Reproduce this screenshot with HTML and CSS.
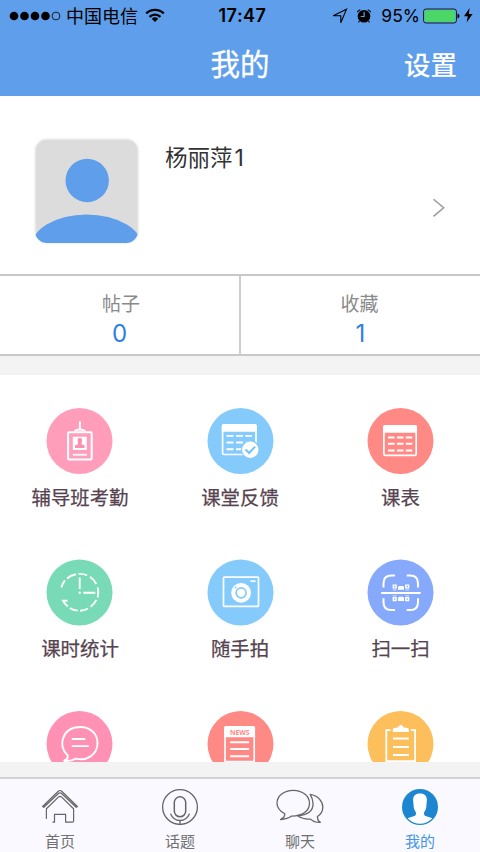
FILE: index.html
```html
<!DOCTYPE html>
<html lang="zh-CN">
<head>
<meta charset="utf-8">
<title>我的</title>
<link rel="stylesheet" href="styles.css">
</head>
<body>
<header class="top">
  <div class="status">
    <div class="status-left">
      <svg width="52" height="12" viewBox="0 0 52 12"><circle cx="5" cy="6" r="4.3"/><circle cx="15.5" cy="6" r="4.3"/><circle cx="26" cy="6" r="4.3"/><circle cx="36.5" cy="6" r="4.3"/><circle cx="47" cy="6" r="3.9" fill="none" stroke="#000" stroke-width=".8"/></svg>
      <span class="carrier">中国电信</span>
      <svg class="wifi" width="20" height="15" viewBox="0 0 20 15" fill="none" stroke="#000" stroke-width="2.3"><path d="M1.2 5.4a12.6 12.6 0 0 1 17.6 0M4.5 8.8a8 8 0 0 1 11 0"/><path d="M10 14l-3.3-3.2a5 5 0 0 1 6.6 0z" fill="#000" stroke="none"/></svg>
    </div>
    <span class="time">17:47</span>
    <div class="status-right">
      <svg width="16" height="16" viewBox="0 0 16 16" fill="none" stroke="#000" stroke-width="1.1"><path d="M1.2 7.7L14.5 1.2 8.8 14.7V7.7z"/></svg>
      <svg class="alarm" width="16" height="16" viewBox="0 0 16 16"><circle cx="8" cy="8.2" r="6.3"/><path d="M1.3 4.3A5 5 0 0 1 4.3 1.7M14.7 4.3a5 5 0 0 0-3-2.600M3.500 13l-1 1.300M12.500 13l1 1.300" fill="none" stroke="#000" stroke-width="1.100"/><path d="M8.100 4v4.500H4.700" fill="none" stroke="#5f9eea" stroke-width="1.200"/></svg>
      <span class="percent">95%</span>
      <svg class="battery" width="37" height="16" viewBox="0 0 37 16"><rect x=".5" y="1" width="33" height="14" rx="2.500" fill="none" stroke="#111" stroke-width=".9"/><rect x="1.600" y="2.200" width="30.500" height="11.600" rx="1.300" fill="#4bd763"/><path d="M34.500 5.500q2 .7 2 2.500t-2 2.500z"/></svg>
      <svg class="bolt" width="9" height="15" viewBox="0 0 9 15"><path d="M5.600 0L0 8.300h3.800L2.600 14.500 8.600 6H4.800z"/></svg>
    </div>
  </div>
  <div class="nav"><span></span><h1>我的</h1><a class="settings">设置</a></div>
</header>

<section class="profile">
  <svg class="avatar" width="106" height="106" viewBox="0 0 106 106">
    <defs><clipPath id="face"><rect x="1" y="1" width="103" height="104" rx="12"/></clipPath></defs>
    <rect x="1" y="1" width="103.400" height="104" rx="12" fill="#dcdcdc" stroke="#efefef" stroke-width="1.600"/>
    <g fill="#5f9eea" clip-path="url(#face)"><circle cx="53.200" cy="42.500" r="21.700"/><ellipse cx="52.700" cy="110" rx="56" ry="33.500"/></g>
  </svg>
  <span class="name">杨丽萍<i class="digit">1</i></span>
  <svg class="chevron" width="14" height="20" viewBox="0 0 14 20" fill="none" stroke="#999" stroke-width="1.500"><path d="M1.500 1.200l10.200 8.600L1.500 18.400"/></svg>
</section>

<section class="stats">
  <div class="stat"><span>帖子</span><b>0</b></div>
  <div class="stat"><span>收藏</span><b>1</b></div>
</section>

<main class="grid">
  <div class="item">
    <svg class="icon" viewBox="0 0 67 67"><circle cx="33.500" cy="33" r="33" fill="#ff9dba"/>
      <g transform="translate(.5 0)"><g fill="none" stroke="#fff" stroke-width="2"><path d="M33.400 13.500V22M28 23q5.400-3 10.800 0"/><rect x="21.600" y="24.200" width="23.600" height="27.200" rx="1"/><path d="M26.300 46.700h14" stroke-width="1.800"/></g>
      <path d="M26.300 28.700h14V42h-14z" fill="#fff"/><path d="M28.500 40v-2.600l3-1.200v-1.400q-1.600-4.500 1.800-4.700 3.400.2 1.800 4.700v1.400l3 1.200V40z" fill="#ff8fb0"/></g></svg>
    <span>辅导班考勤</span>
  </div>
  <div class="item">
    <svg class="icon" viewBox="0 0 67 67"><circle cx="33.500" cy="33" r="33" fill="#84cbfb"/>
      <g transform="translate(.5 0)"><rect x="15.100" y="17" width="33.400" height="29.500" rx="1.400" fill="none" stroke="#fff" stroke-width="1.700"/><path d="M14.300 17.500q0-1.600 1.600-1.600h31.800q1.600 0 1.600 1.600v6.300h-35z" fill="#fff"/>
      <path d="M19 27.900h7m2.500 0h7m2.300 0h6.700M19 34.500h7m2.500 0h7m2.300 0h6.700M19 41.200h7m2.500 0h7" stroke="#fff" stroke-width="1.900"/>
      <circle cx="42.800" cy="41.700" r="9.400" fill="#84cbfb"/><circle cx="42.800" cy="41.700" r="8.200" fill="#fff"/><path d="M38 41.500l3.600 3.500 6-6.400" fill="none" stroke="#76c1f5" stroke-width="2"/></g></svg>
    <span>课堂反馈</span>
  </div>
  <div class="item">
    <svg class="icon" viewBox="0 0 67 67"><circle cx="33.500" cy="33" r="33" fill="#ff8985"/>
      <g transform="translate(.5 0)"><rect x="16.400" y="18" width="32.300" height="29.400" rx="1.400" fill="none" stroke="#fff" stroke-width="1.700"/><path d="M15.600 18.500q0-1.600 1.600-1.600h30.700q1.600 0 1.600 1.600v6.300H15.600z" fill="#fff"/>
      <path d="M20.500 29.400h6.600m2.300 0H36m2.300 0h6.500M20.500 35.800h6.600m2.300 0H36m2.300 0h6.500M20.500 42.600h6.600m2.300 0H36m2.300 0h6.500" stroke="#fff" stroke-width="2"/></g></svg>
    <span>课表</span>
  </div>
  <div class="item">
    <svg class="icon" viewBox="0 0 67 67"><circle cx="33.500" cy="33.400" r="33" fill="#79dab8"/>
      <g transform="translate(.5 .4)" fill="none" stroke="#fff" stroke-width="1.900"><path d="M14.800 28A18.700 18.700 0 0 1 18.500 21M20.500 19.100a18.700 18.700 0 0 1 9-4.300M32 14.500q4.500-.3 8.600 1.400M43.500 17.300q4.200 2.900 6.300 7.300M51.200 28.200q1.300 4.800 0 9.900M50 40.500q-2.100 4-5.900 6.800M41.500 49.100q-3.500 2.100-8 2.200M31.200 51.200q-4.300-.3-7.800-2.500M21.300 47.100q-3.100-2.600-4.800-5.800h4.500"/><path d="M33.200 18v11.600M36.800 33.300h12"/><circle cx="33.200" cy="33.300" r="1.200" fill="#fff" stroke="none"/></g></svg>
    <span>课时统计</span>
  </div>
  <div class="item">
    <svg class="icon" viewBox="0 0 67 67"><circle cx="33.500" cy="33.400" r="33" fill="#84cbfb"/>
      <g transform="translate(.5 .4)"><rect x="16" y="17.700" width="35" height="29.300" rx="1" fill="none" stroke="#fff" stroke-width="1.700"/><circle cx="33.600" cy="33.400" r="9.900" fill="#fff"/><circle cx="33.600" cy="33.400" r="5" fill="none" stroke="#84cbfb" stroke-width="1.700"/><circle cx="28" cy="28" r="1" fill="#84cbfb"/><path d="M43 21.800h5" stroke="#fff" stroke-width="1.700"/></g></svg>
    <span>随手拍</span>
  </div>
  <div class="item">
    <svg class="icon" viewBox="0 0 67 67"><circle cx="33.500" cy="33.400" r="33" fill="#86a9fb"/>
      <g transform="translate(.5 .4)"><path d="M16 28v-4q0-7.800 7.800-7.800H27.500M39.200 16.200h3.500q7.800 0 7.800 7.800v4M16 38.800v4q0 7.800 7.800 7.800h3.700M39.200 50.600h3.500q7.800 0 7.800-7.800v-4M13.600 33.600h39.600" fill="none" stroke="#fff" stroke-width="2"/>
      <g fill="none" stroke="#fff" stroke-width="1.400"><path d="M25.800 25.700h2.800v2.800h-2.800zM38.300 25.700h2.800v2.800h-2.800zM25.800 38.300h2.800v2.800h-2.800zM38.300 38.300h2.800v2.800h-2.800z"/><path d="M25.200 30.500h3.800m9 0h3.600M25.200 36.400h3.800m9 0h3.600" stroke-width=".7"/></g><path d="M31.500 26.500h4l1 1.200v2.700h-6v-2.700zM31.500 37.400h4l1 1.200v3h-6v-3z" fill="#fff"/></g></svg>
    <span>扫一扫</span>
  </div>
  <div class="item">
    <svg class="icon" viewBox="0 0 67 67"><circle cx="33.500" cy="33" r="33" fill="#ff91b4"/>
      <g transform="translate(.5 0)" fill="none" stroke="#fff" stroke-width="1.900"><path d="M21 44.200C11.500 36.500 14.600 16 33.800 16 43.800 16 51 22.700 51 32c0 12-11.200 18.400-21.600 15.600-3.400 2-7.700 2.700-12.200 2.200 3.500-1.200 4.500-3.400 3.800-5.600z"/><path d="M25.300 28h13.500M25.300 35.100h17"/></g></svg>
  </div>
  <div class="item">
    <svg class="icon" viewBox="0 0 67 67"><circle cx="33.500" cy="33" r="33" fill="#ff8985"/>
      <path d="M18 50.500V17h29.200v33.500z" fill="none" stroke="#fff" stroke-width="1.700"/><path d="M17.100 16.500q0-1.500 1.500-1.500h28q1.500 0 1.500 1.500v9.800h-31z" fill="#fff"/><text class="news" x="32.700" y="24.100" textLength="19.600" lengthAdjust="spacingAndGlyphs">NEWS</text>
      <path d="M23.200 31.200h18.900M23.200 38h18.900M23.200 45.200h18.900" stroke="#fff" stroke-width="2"/></svg>
  </div>
  <div class="item">
    <svg class="icon" viewBox="0 0 67 67"><circle cx="33.500" cy="33" r="33" fill="#fdbf5b"/>
      <g transform="translate(.5 0)"><path d="M23.200 19.200h-4.400v31h28.800v-31h-4.400" fill="none" stroke="#fff" stroke-width="1.800"/><path d="M25.300 21v-2.300q0-1.300 1.500-1.700l3.500-.6q.8-2.500 3-2.500t3 2.500l3.500.6q1.500.4 1.500 1.700V21z" fill="#fff"/><path d="M25.500 27.500h15.800M25.500 35.900h15.800M25.500 44.100h15.800" stroke="#fff" stroke-width="2"/></g></svg>
  </div>
</main>

<nav class="tabs">
  <a class="tab">
    <svg width="48" height="38" viewBox="0 0 48 38" fill="none" stroke="#666" stroke-width="1.200" stroke-linejoin="round" stroke-linecap="round"><path d="M6.600 19.500L22.300 4.200q1.700-1.400 3.400 0l15.700 15.300-1.200.8L25.300 6.300q-1.300-1-2.600 0L7.800 20.300z"/><path d="M10.400 31.500V21.700L22.600 9.900q1.400-1 2.800 0l12.200 11.800v12.200q0 1.200-1.200 1.200h-6.800V27.400H18.500v7.700h-1.600"/></svg>
    <span>首页</span>
  </a>
  <a class="tab">
    <svg width="48" height="38" viewBox="0 0 48 38" fill="none" stroke="#666" stroke-width="1.300"><circle cx="24" cy="20" r="17.400"/><rect x="18.300" y="9.800" width="11.400" height="20" rx="5.700" stroke-width="1.500"/><path d="M14.500 26.700q2.700 6.500 9.500 6.800 6.800-.3 9.500-6.800M24 33.500v4"/></svg>
    <span>话题</span>
  </a>
  <a class="tab">
    <svg width="48" height="38" viewBox="0 0 48 38" fill="none" stroke="#666" stroke-width="1.300" stroke-linejoin="round"><path d="M8.800 26.800C5 24.700 1 21.200 1 16.200 1 8.800 8 3.300 17.200 3.300S33.500 8.800 33.500 16.200 26.500 29.500 15.200 29.200c-2.700 2-5.700 2.900-10.700 3.300C7.500 31.200 8.900 29.500 8.800 26.800z"/><path d="M34.200 7.400c8 1.200 12.600 7 12.600 12.800 0 4.300-2.500 7.500-5.300 9.300-.2 2.500.5 4.300 2.800 5.900-4.300.2-7.600-1.200-9.800-3.300-5.500.6-9.500-1-13.300-3.600 10 .1 16.400-4.600 15.800-12.500-.2-3.300-1.200-6-2.800-8.600z"/></svg>
    <span>聊天</span>
  </a>
  <a class="tab active">
    <svg width="48" height="38" viewBox="0 0 48 38"><defs><clipPath id="me"><circle cx="24" cy="20" r="16.700"/></clipPath></defs><circle cx="24" cy="20" r="18" fill="#1c87d0"/><path clip-path="url(#me)" d="M24 6.500c5.500 0 7.500 3.300 6.700 8.500l-.4 5c-.4 2.500-1.300 4-2.200 5.200v2.500c1.200 2 7.200 2.200 10.700 5V38H9.200v-5.300c3.500-2.800 9.500-3 10.700-5v-2.500c-.9-1.200-1.800-2.700-2.200-5.200l-.4-5c-.8-5.200 1.200-8.500 6.700-8.500z" fill="#fff"/></svg>
    <span>我的</span>
  </a>
</nav>
</body>
</html>
```
FILE: styles.css
```css
* { box-sizing: border-box; }
body {
  margin: 0;
  width: 480px;
  height: 852px;
  display: flex;
  flex-direction: column;
  overflow: hidden;
  background: #f3f3f3;
  font-family: "Noto Sans CJK SC", sans-serif;
}
svg { display: block; flex: none; }

.top { height: 96px; background: #5f9eea; flex: none; }
.status {
  height: 31px;
  display: grid;
  grid-template-columns: 1fr auto 1fr;
  align-items: center;
  padding: 0 7px 0 9px;
}
.status-left, .status-right { display: flex; align-items: center; }
.status-right { justify-content: flex-end; }
.carrier { font-size: 18px; line-height: 28px; margin: -2px 0 0 5px; }
.wifi { margin-left: 7px; }
.time { font: 600 18px/30px Inter, sans-serif; letter-spacing: .5px; padding-left: 3px; }
.alarm { margin-left: 8px; }
.percent { font: 400 17.500px/30px Inter, sans-serif; margin-left: 9px; margin-right: -1px; }
.battery { margin-left: 4px; }
.bolt { margin-left: 4px; }
.nav {
  height: 63px;
  display: grid;
  grid-template-columns: 1fr auto 1fr;
  align-items: center;
  color: #fff;
  padding: 0 23px;
}
.nav h1 { margin: 0; font-size: 29.500px; font-weight: 400; line-height: 58px; margin-top: -2px; -webkit-text-stroke: .3px #fff; }
.settings { justify-self: end; font-size: 26.500px; font-weight: 500; line-height: 58px; padding-top: 3px; }

.profile {
  height: 178px;
  flex: none;
  background: #fff;
  display: flex;
  align-items: flex-start;
  padding: 42px 34px 0 34px;
}
.name { margin: 2px 0 0 25px; font-size: 22.500px; line-height: 32px; color: #333; }
.digit { font: 400 23px/30px Inter, sans-serif; margin-left: 2px; }
.chevron { margin: 60px 0 0 auto; }

.stats {
  height: 82px;
  flex: none;
  display: flex;
  background: #fff;
  border-top: 2px solid #c8c8c8;
  border-bottom: 2px solid #c8c8c8;
}
.stat { flex: 0 0 239px; display: flex; flex-direction: column; align-items: center; padding-top: 13px; }
.stat:first-child { padding-left: 3px; }
.stat:first-child b { margin-left: -3px; }
.stat + .stat { flex: 1; border-left: 2px solid #ccc; padding-right: 2px; }
.stat + .stat b { margin-left: 2px; }
.stat span { font-size: 19px; line-height: 28px; color: #8a8a8a; }
.stat b { font: 400 24px/32px Inter, sans-serif; margin-top: 1px; color: #2e7fe4; }

.grid {
  margin-top: 19px;
  height: 387px;
  flex: none;
  overflow: hidden;
  background: #fff;
  display: grid;
  grid-template-columns: 160px 160px 161px;
  grid-auto-rows: 151.500px;
  grid-template-rows: 151px 152px;
  padding-top: 33px;
  margin-left: -1px;
  padding-left: 1px;
}
.item { display: flex; flex-direction: column; align-items: center; }
.icon { width: 67px; height: 67px; }
.item:nth-child(3n + 1) .icon { margin-left: -1px; }
.item:nth-child(3n + 2) .icon { margin-left: 1px; }
.item span { margin-top: 8px; font-size: 19.400px; line-height: 28px; color: #56434f; -webkit-text-stroke: .25px #56434f; }
.news { font: 700 7.200px "Noto Sans", sans-serif; fill: #ff8985; text-anchor: middle; }

.tabs {
  margin-top: 15px;
  height: 75px;
  flex: none;
  display: flex;
  background: #f9f9ff;
  border-top: 2px solid #d2d2d4;
}
.tab { flex: 1; display: flex; flex-direction: column; align-items: center; padding-top: 8px; color: #707070; }
.tab span { font-size: 15px; line-height: 20px; margin-top: 6px; }
.tab.active { color: #4395ea; }
```
